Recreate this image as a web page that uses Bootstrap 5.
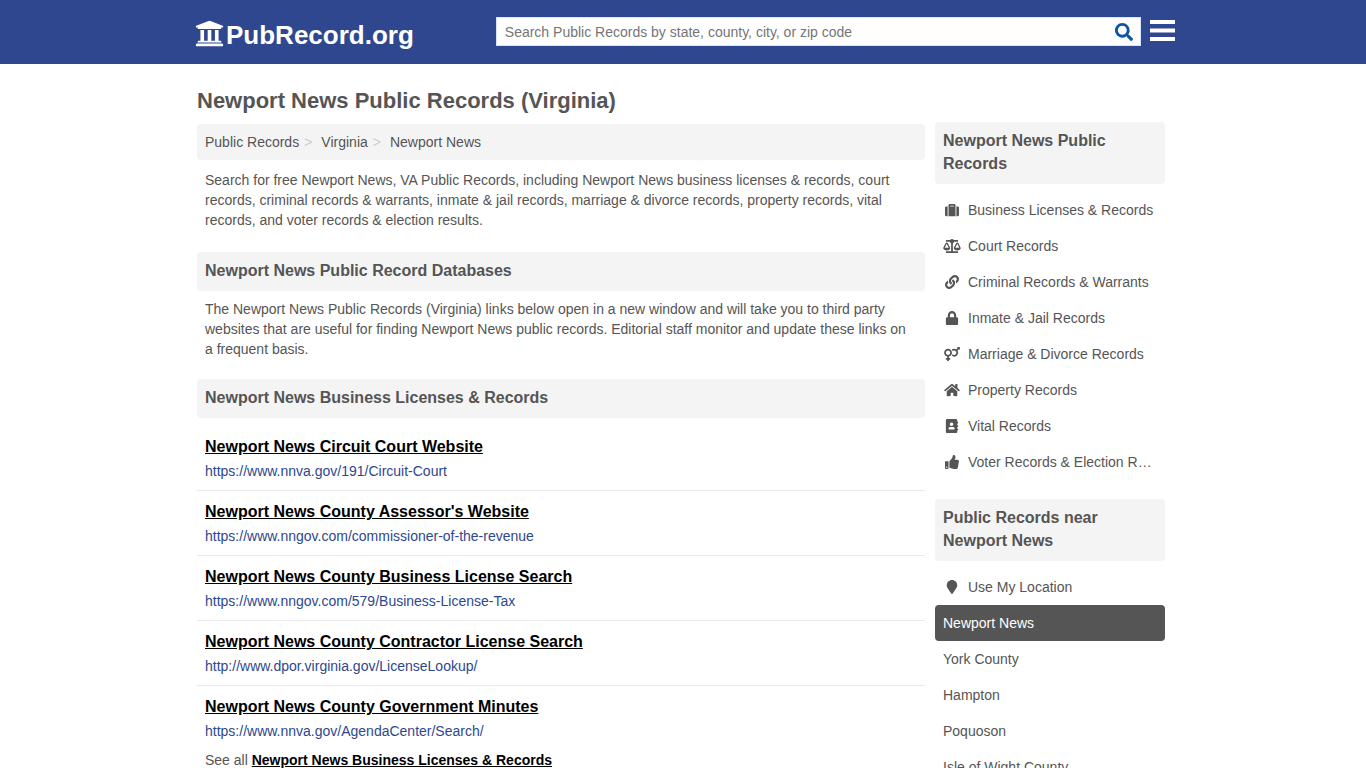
<!DOCTYPE html>
<html lang="en">
<head>
<meta charset="utf-8">
<meta name="viewport" content="width=device-width, initial-scale=1">
<title>Newport News Public Records (Virginia)</title>
<link href="https://cdn.jsdelivr.net/npm/bootstrap@5.3.0/dist/css/bootstrap.min.css" rel="stylesheet">
<style>
  body { font-family: "Liberation Sans", Arial, sans-serif; font-size: 14px; line-height: 20px; color: #555; }
  .page-width { max-width: 980px; }
  .site-header { background: #2e478f; min-height: 64px; }
  .header-inner { max-width: 984px; padding: 0 0 0 4px; }
  .brand { font-size: 26px; line-height: 40px; font-weight: 700; color: #fff; padding-top: 15px; gap: 2px; }
  .brand svg { margin-bottom: 3px; }
  .header-tools { padding-top: 17px; }
  .search-form { height: 29px; margin-left: 82px; background: #fff; border: 1px solid #d5e4fa; }
  .search-form input { font-size: 14px; line-height: 20px; padding: 0 8px; color: #555; }
  .search-form input::placeholder { color: #757575; }
  .search-form button { color: #0b55a4; padding: 0 7px; line-height: 1; }
  .menu-btn { color: #fff; margin-left: 9px; line-height: 1; }
  .content-wrap { padding: 0 8px 20px 4px; gap: 10px; }
  .page-title { font-size: 22px; line-height: 33px; font-weight: 700; margin: 20px 0 7px; }
  .crumbs { background: #f4f4f4; border-radius: 4px; padding: 8px; margin-bottom: 10px; }
  .crumbs a, .side-list a { color: #555; text-decoration: none; }
  .crumbs li + li::before { content: ">"; color: #ccc; padding: 0 9px 0 5px; }
  .section-head { font-size: 16px; line-height: 23px; font-weight: 700; background: #f4f4f4; border-radius: 4px; padding: 7px 8px 9px; margin-bottom: 8px; }
  .blurb { padding: 0 8px; margin-bottom: 20px; }
  .intro { padding: 0 8px; margin-bottom: 22px; }
  .records li { padding: 9px 8px; }
  .records li + li { border-top: 1px solid #eaeaea; }
  .records a { font-size: 16px; line-height: 24px; margin-bottom: 2px; }
  .strong-link { color: #000; font-weight: 700; text-decoration: underline; }
  .records span { color: #2e478f; }
  .side { width: 230px; padding-top: 58px; }
  .side-list { margin-bottom: 19px; }
  .side-list a { padding: 8px; border-radius: 4px; }
  .side-list a.current { background: #555; color: #fff; }
  .side-list svg { width: 18px; height: 14px; margin-right: 7px; fill: currentColor; vertical-align: -2px; }
  @media (max-width: 767px) {
    .side { width: 100%; padding-top: 0; }
    .search-form { margin-left: 12px; }
  }
</style>
</head>
<body>
<header class="site-header">
  <div class="container-fluid header-inner d-flex">
    <a class="brand d-flex align-items-center text-decoration-none" href="#">
      <svg width="29" height="29" viewBox="0 0 512 512" fill="currentColor" aria-hidden="true"><path d="M496 128v16a8 8 0 0 1-8 8h-24v12c0 6.627-5.373 12-12 12H60c-6.627 0-12-5.373-12-12v-12H24a8 8 0 0 1-8-8v-16a8 8 0 0 1 4.941-7.392l232-88a7.996 7.996 0 0 1 6.118 0l232 88A8 8 0 0 1 496 128zm-24 304H40c-13.255 0-24 10.745-24 24v16a8 8 0 0 0 8 8h464a8 8 0 0 0 8-8v-16c0-13.255-10.745-24-24-24zM96 192v192H60c-6.627 0-12 5.373-12 12v20h416v-20c0-6.627-5.373-12-12-12h-36V192h-64v192h-64V192h-64v192h-64V192H96z"/></svg>
      <span>PubRecord.org</span>
    </a>
    <div class="header-tools d-flex flex-grow-1 align-items-start">
      <form class="search-form d-flex flex-grow-1 align-items-center" role="search">
        <input class="border-0 flex-grow-1 w-100 bg-transparent" type="text" aria-label="Search public records" placeholder="Search Public Records by state, county, city, or zip code">
        <button class="border-0 bg-transparent" type="button" aria-label="Search"><svg width="18" height="18" viewBox="0 0 512 512" fill="currentColor"><path d="M505 442.700L405.300 343c-4.500-4.500-10.600-7-17-7H372c27.600-35.300 44-79.700 44-128C416 93.100 322.900 0 208 0S0 93.100 0 208s93.100 208 208 208c48.300 0 92.700-16.400 128-44v16.300c0 6.400 2.500 12.500 7 17l99.700 99.700c9.400 9.400 24.600 9.400 33.900 0l28.300-28.300c9.400-9.400 9.400-24.600.1-34zM208 336c-70.700 0-128-57.200-128-128 0-70.700 57.200-128 128-128 70.700 0 128 57.200 128 128 0 70.700-57.200 128-128 128z"/></svg></button>
      </form>
      <button class="menu-btn border-0 bg-transparent p-0" type="button" aria-label="Menu"><svg width="25" height="29" viewBox="0 0 25 29" fill="currentColor"><path d="M0 3h25v4H0zM0 11.500h25v4H0zM0 20h25v4H0z"/></svg></button>
    </div>
  </div>
</header>

<div class="container-fluid page-width content-wrap d-flex flex-wrap flex-md-nowrap align-items-start">
  <main class="flex-grow-1">
    <h1 class="page-title">Newport News Public Records (Virginia)</h1>
    <nav aria-label="Breadcrumb">
      <ol class="crumbs list-unstyled d-flex flex-wrap">
        <li><a href="#">Public Records</a></li>
        <li><a href="#">Virginia</a></li>
        <li><a href="#">Newport News</a></li>
      </ol>
    </nav>
    <p class="intro">Search for free Newport News, VA Public Records, including Newport News business licenses &amp; records, court records, criminal records &amp; warrants, inmate &amp; jail records, marriage &amp; divorce records, property records, vital records, and voter records &amp; election results.</p>
    <h2 class="section-head">Newport News Public Record Databases</h2>
    <p class="blurb">The Newport News Public Records (Virginia) links below open in a new window and will take you to third party websites that are useful for finding Newport News public records. Editorial staff monitor and update these links on a frequent basis.</p>
    <h2 class="section-head">Newport News Business Licenses &amp; Records</h2>
    <ul class="records list-unstyled mb-0">
      <li><a class="strong-link d-table" href="#">Newport News Circuit Court Website</a><span class="d-block">https://www.nnva.gov/191/Circuit-Court</span></li>
      <li><a class="strong-link d-table" href="#">Newport News County Assessor's Website</a><span class="d-block">https://www.nngov.com/commissioner-of-the-revenue</span></li>
      <li><a class="strong-link d-table" href="#">Newport News County Business License Search</a><span class="d-block">https://www.nngov.com/579/Business-License-Tax</span></li>
      <li><a class="strong-link d-table" href="#">Newport News County Contractor License Search</a><span class="d-block">http://www.dpor.virginia.gov/LicenseLookup/</span></li>
      <li><a class="strong-link d-table" href="#">Newport News County Government Minutes</a><span class="d-block">https://www.nnva.gov/AgendaCenter/Search/</span></li>
    </ul>
    <p class="blurb">See all <a class="strong-link" href="#">Newport News Business Licenses &amp; Records</a></p>
  </main>

  <aside class="side flex-shrink-0">
    <h2 class="section-head">Newport News Public Records</h2>
    <ul class="side-list list-unstyled">
      <li><a class="d-block text-truncate" href="#"><svg viewBox="0 0 512 512"><path d="M128 480h256V80c0-26.500-21.500-48-48-48H176c-26.500 0-48 21.500-48 48v400zm64-384h128v32H192V96zm320 80v256c0 26.500-21.500 48-48 48h-48V128h48c26.500 0 48 21.500 48 48zM96 480H48c-26.500 0-48-21.500-48-48V176c0-26.500 21.500-48 48-48h48v352z"/></svg>Business Licenses &amp; Records</a></li>
      <li><a class="d-block text-truncate" href="#"><svg viewBox="0 0 640 512"><path d="M256 336h-.02c0-16.180 1.340-8.730-85.050-181.510-17.650-35.290-68.190-35.360-85.870 0C-2.060 328.750.02 320.330.02 336H0c0 44.180 57.310 80 128 80s128-35.820 128-80zM128 176l72 144H56l72-144zm511.980 160c0-16.180 1.340-8.730-85.050-181.510-17.650-35.290-68.190-35.360-85.870 0-87.120 174.260-85.040 165.840-85.040 181.510H384c0 44.180 57.310 80 128 80s128-35.820 128-80h-.02zM440 320l72-144 72 144H440zm88 128H352V153.250c23.510-10.290 41.160-31.480 46.390-57.250H528c8.840 0 16-7.160 16-16V48c0-8.840-7.160-16-16-16H383.640C369.040 12.680 346.090 0 320 0s-49.040 12.680-63.640 32H112c-8.840 0-16 7.160-16 16v32c0 8.840 7.160 16 16 16h129.610c5.230 25.760 22.870 46.960 46.390 57.250V448H112c-8.840 0-16 7.160-16 16v32c0 8.840 7.160 16 16 16h416c8.840 0 16-7.160 16-16v-32c0-8.840-7.160-16-16-16z"/></svg>Court Records</a></li>
      <li><a class="d-block text-truncate" href="#"><svg viewBox="0 0 512 512"><path d="M326.612 185.391c59.747 59.809 58.927 155.698.36 214.590-.11.120-.24.250-.36.370l-67.200 67.200c-59.270 59.270-155.699 59.262-214.960 0-59.270-59.260-59.270-155.700 0-214.960l37.106-37.106c9.840-9.840 26.786-3.300 27.294 10.606.648 17.722 3.826 35.527 9.690 52.721 1.986 5.822.567 12.262-3.783 16.612l-13.087 13.087c-28.026 28.026-28.905 73.660-1.155 101.960 28.024 28.579 74.086 28.749 102.325.510l67.200-67.190c28.191-28.191 28.073-73.757 0-101.830-3.701-3.694-7.429-6.564-10.341-8.569a16.037 16.037 0 0 1-6.947-12.606c-.396-10.567 3.348-21.456 11.698-29.806l21.054-21.055c5.521-5.521 14.182-6.199 20.584-1.731a152.482 152.482 0 0 1 20.522 17.197zM467.547 44.449c-59.261-59.262-155.690-59.270-214.960 0l-67.200 67.200c-.12.120-.25.250-.36.370-58.566 58.892-59.387 154.781.360 214.590a152.454 152.454 0 0 0 20.521 17.196c6.402 4.468 15.064 3.789 20.584-1.731l21.054-21.055c8.350-8.350 12.094-19.239 11.698-29.806a16.037 16.037 0 0 0-6.947-12.606c-2.912-2.005-6.640-4.875-10.341-8.569-28.073-28.073-28.191-73.639 0-101.830l67.200-67.190c28.239-28.239 74.300-28.069 102.325.510 27.750 28.300 26.872 73.934-1.155 101.960l-13.087 13.087c-4.350 4.350-5.769 10.790-3.783 16.612 5.864 17.194 9.042 34.999 9.690 52.721.509 13.906 17.454 20.446 27.294 10.606l37.106-37.106c59.271-59.259 59.271-155.699.001-214.959z"/></svg>Criminal Records &amp; Warrants</a></li>
      <li><a class="d-block text-truncate" href="#"><svg viewBox="0 0 448 512"><path d="M400 224h-24v-72C376 68.200 307.800 0 224 0S72 68.200 72 152v72H48c-26.500 0-48 21.500-48 48v192c0 26.500 21.500 48 48 48h352c26.500 0 48-21.500 48-48V272c0-26.500-21.500-48-48-48zm-104 0H152v-72c0-39.700 32.300-72 72-72s72 32.300 72 72v72z"/></svg>Inmate &amp; Jail Records</a></li>
      <li><a class="d-block text-truncate" href="#"><svg viewBox="0 0 576 512"><path d="M564 0h-79c-10.700 0-16 12.900-8.500 20.500l16.900 16.900-48.700 48.700C422.500 72.100 396.200 64 368 64c-33.700 0-64.600 11.600-89.200 30.900 14 16.700 25 36 32.100 57.100 14.500-14.800 34.700-24 57.100-24 44.100 0 80 35.900 80 80s-35.900 80-80 80c-22.300 0-42.600-9.200-57.100-24-7.100 21.100-18 40.400-32.100 57.100 24.500 19.400 55.500 30.900 89.200 30.900 79.500 0 144-64.500 144-144 0-28.200-8.100-54.500-22.100-76.700l48.700-48.700 16.900 16.900c2.400 2.400 5.500 3.500 8.400 3.500 6.200 0 12.100-4.800 12.100-12V12c0-6.600-5.400-12-12-12zM144 64C64.500 64 0 128.500 0 208c0 68.500 47.900 125.900 112 140.400V400H76c-6.600 0-12 5.400-12 12v40c0 6.600 5.400 12 12 12h36v36c0 6.600 5.400 12 12 12h40c6.600 0 12-5.400 12-12v-36h36c6.600 0 12-5.400 12-12v-40c0-6.600-5.400-12-12-12h-36v-51.600c64.100-14.600 112-71.900 112-140.400 0-79.500-64.500-144-144-144zm0 224c-44.100 0-80-35.900-80-80s35.900-80 80-80 80 35.900 80 80-35.900 80-80 80z"/></svg>Marriage &amp; Divorce Records</a></li>
      <li><a class="d-block text-truncate" href="#"><svg viewBox="0 0 576 512"><path d="M280.370 148.260L96 300.110V464a16 16 0 0 0 16 16l112.060-.29a16 16 0 0 0 15.920-16V368a16 16 0 0 1 16-16h64a16 16 0 0 1 16 16v95.640a16 16 0 0 0 16 16.050L464 480a16 16 0 0 0 16-16V300L295.670 148.260a12.190 12.190 0 0 0-15.300 0zM571.600 251.470L488 182.560V44.050a12 12 0 0 0-12-12h-56a12 12 0 0 0-12 12v72.610L318.470 43a48 48 0 0 0-61 0L4.340 251.470a12 12 0 0 0-1.600 16.900l25.500 31A12 12 0 0 0 45.150 301l235.220-193.740a12.190 12.190 0 0 1 15.300 0L530.900 301a12 12 0 0 0 16.900-1.600l25.500-31a12 12 0 0 0-1.700-16.930z"/></svg>Property Records</a></li>
      <li><a class="d-block text-truncate" href="#"><svg viewBox="0 0 448 512"><path d="M436 160c6.600 0 12-5.400 12-12v-40c0-6.600-5.400-12-12-12h-20V48c0-26.500-21.500-48-48-48H48C21.500 0 0 21.500 0 48v416c0 26.500 21.500 48 48 48h320c26.500 0 48-21.500 48-48v-48h20c6.600 0 12-5.400 12-12v-40c0-6.600-5.400-12-12-12h-20v-64h20c6.600 0 12-5.400 12-12v-40c0-6.600-5.400-12-12-12h-20v-64h20zm-228-32c35.300 0 64 28.700 64 64s-28.700 64-64 64-64-28.700-64-64 28.700-64 64-64zm112 236.800c0 10.600-10 19.200-22.400 19.200H118.400C106 384 96 375.400 96 364.800v-19.200c0-31.800 30.100-57.600 67.200-57.600h5c12.300 5.100 25.700 8 39.800 8s27.600-2.900 39.800-8h5c37.100 0 67.200 25.800 67.200 57.600v19.200z"/></svg>Vital Records</a></li>
      <li><a class="d-block text-truncate" href="#"><svg viewBox="0 0 512 512"><path d="M104 224H24c-13.255 0-24 10.745-24 24v240c0 13.255 10.745 24 24 24h80c13.255 0 24-10.745 24-24V248c0-13.255-10.745-24-24-24zM64 472c-13.255 0-24-10.745-24-24s10.745-24 24-24 24 10.745 24 24-10.745 24-24 24zM384 81.452c0 42.416-25.970 66.208-33.277 94.548h101.723c33.397 0 59.397 27.746 59.553 58.098.084 17.938-7.546 37.249-19.439 49.197l-.11.110c9.836 23.337 8.237 56.037-9.308 79.469 8.681 25.895-.069 57.704-16.382 74.757 4.298 17.598 2.244 32.575-6.148 44.632C440.202 511.587 389.616 512 346.839 512l-2.845-.001c-48.287-.017-87.806-17.598-119.560-31.725-15.957-7.099-36.821-15.887-52.651-16.178-6.540-.120-11.783-5.457-11.783-11.998v-213.770c0-3.200 1.282-6.271 3.558-8.521 39.614-39.144 56.648-80.587 89.117-113.111 14.804-14.832 20.188-37.236 25.393-58.902C282.515 39.293 291.817 0 312 0c24 0 72 8 72 81.452z"/></svg>Voter Records &amp; Election Results</a></li>
    </ul>
    <h2 class="section-head">Public Records near Newport News</h2>
    <ul class="side-list list-unstyled">
      <li><a class="d-block text-truncate" href="#"><svg viewBox="0 0 384 512"><path d="M172.268 501.670C26.970 291.031 0 269.413 0 192 0 85.961 85.961 0 192 0s192 85.961 192 192c0 77.413-26.970 99.031-172.268 309.670-9.535 13.774-29.930 13.773-39.464 0z"/></svg>Use My Location</a></li>
      <li><a class="current d-block text-truncate" href="#" aria-current="page">Newport News</a></li>
      <li><a class="d-block text-truncate" href="#">York County</a></li>
      <li><a class="d-block text-truncate" href="#">Hampton</a></li>
      <li><a class="d-block text-truncate" href="#">Poquoson</a></li>
      <li><a class="d-block text-truncate" href="#">Isle of Wight County</a></li>
    </ul>
  </aside>
</div>
<script src="https://cdn.jsdelivr.net/npm/bootstrap@5.3.0/dist/js/bootstrap.bundle.min.js"></script>
</body>
</html>
